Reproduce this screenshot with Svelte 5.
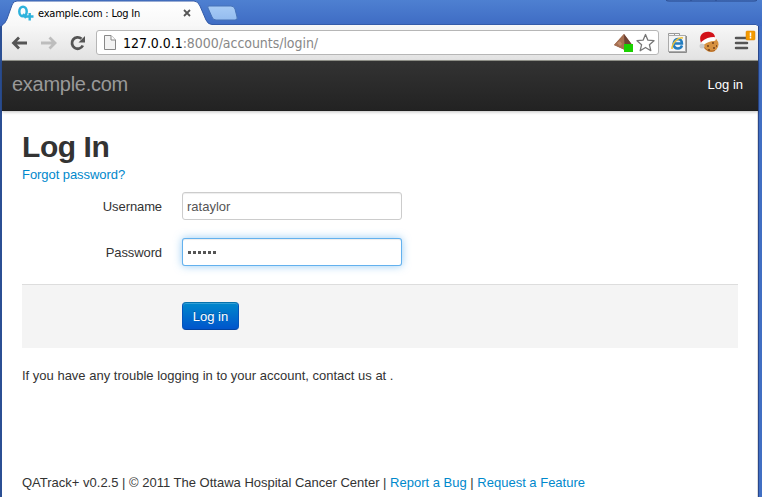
<script>
  let username = $state('rataylor');
  let password = $state('secret');
</script>

<div class="window">
  <header class="tabs">
    <svg class="tab-shape" width="762" height="26" viewBox="0 0 762 26">
      <defs>
        <linearGradient id="tab" x2="0" y2="1"><stop stop-color="#fff" /><stop offset="1" stop-color="#f7f7f7" /></linearGradient>
        <linearGradient id="newtab" x2="0" y2="1"><stop stop-color="#a7cbf5" /><stop offset="1" stop-color="#94bcef" /></linearGradient>
      </defs>
      <path d="M2 28V25Q5 24 7 19L12 5Q13 1 17 1H194Q198 1 200 6L206 20Q208 24.500 212 24.500H756Q758 25 758 28Z" fill="url(#tab)" stroke="#345ba8" />
      <path d="M209 6H231Q234 6 235 9L237 17Q238 20 235 20H216Q213 20 212 17L208 8Q207 6 209 6Z" fill="url(#newtab)" stroke="#4672b7" />
      <path d="M666 0Q666 1 669 1H754Q757 1 757 0M691 0V1M716 0V1" fill="none" stroke="#29498b" />
    </svg>
    <div class="tab">
      <svg width="16" height="16" viewBox="0 0 16 16" fill="none" stroke="#2eb2dc">
        <ellipse cx="5" cy="6.500" rx="3.700" ry="4.800" stroke-width="2.500" />
        <path d="M5 9l3 4" stroke-width="2.200" /><path d="M8 11.500h7.500M11.700 8v7.500" stroke-width="2.400" />
      </svg>
      <span>example.com : Log In</span>
      <svg class="close" width="8" height="8" viewBox="0 0 8 8"><path d="M1 1l6 6M7 1L1 7" stroke="#555" stroke-width="1.800" /></svg>
    </div>
  </header>

  <div class="toolbar">
    <svg class="nav" width="78" height="20" viewBox="0 0 78 20" fill="none">
      <path d="M3 10H17M9 4.500L3.500 10l5.500 5.500" stroke="#555" stroke-width="2.800" />
      <path d="M31 10h14M39.500 4.500L45 10l-5.500 5.500" stroke="#bdbdbd" stroke-width="2.800" />
      <path d="M72.800 12.500A5.700 5.700 0 1 1 71.500 5.800" stroke="#555" stroke-width="2.800" />
      <path d="M75 3v6.500h-6.500z" fill="#555" />
    </svg>
    <div class="address">
      <svg class="doc" width="12" height="15" viewBox="0 0 12 15"><path d="M.5.5h6.500l4.500 4.500v9.500H.5z" fill="#f3f3f3" stroke="#888" /><path d="M7 .5V5h4.500" fill="#fff" stroke="#888" /></svg>
      <span class="url"><b>127.0.0.1</b>:8000/accounts/login/</span>
      <svg class="page-icons" width="42" height="20" viewBox="0 0 42 20">
        <path d="M10 2L19 14l-8 4L0 13z" fill="#8b5a43" /><path d="M10 2l1 16L0 13z" fill="#a66f51" /><path d="M10 2l9 12-8 4z" fill="#6e4335" />
        <path d="M3 11l3-2 2 3-2 2z" fill="#bd8a69" />
        <rect x="10" y="12" width="9" height="8" fill="#1bd000" />
        <path d="M31.500 2.500l2.400 5.700 6.100.5-4.600 4 1.400 6-5.300-3.200-5.300 3.200 1.400-6-4.600-4 6.100-.5z" fill="#fff" stroke="#777" stroke-width="1.300" stroke-linejoin="round" />
      </svg>
    </div>
    <svg class="extensions" width="94" height="28" viewBox="0 0 94 28">
      <path d="M4.500 5.500h6v4h-6zM10.500 5.500h5v3h-5z" fill="#f8f8f8" stroke="#999" />
      <rect x="4.500" y="7.500" width="17" height="16" fill="#f5f5f5" stroke="#aaa" />
      <path d="M5 24.500h17.500V8" fill="none" stroke="#8b8b8b" />
      <path d="M10 15.500h8q0-4-4-4.500-4 .5-4.500 5 .5 4.500 4.500 4.500 3 0 4-3" fill="none" stroke="#237dc0" stroke-width="2.400" />
      <path d="M8 21c0-6 6-12 11-11" fill="none" stroke="#eac13d" stroke-width="1.500" />
      <circle cx="47" cy="16.500" r="7.500" fill="#d6913f" /><path d="M40 19.500q5 5 11 3" stroke="#ae6323" fill="none" />
      <path d="M43 17h2v2h-2zM48 14h2v2h-2zM49 19h2v2h-2zM44 21h2v2h-2zM52 17h1v2h-1z" fill="#8a5323" />
      <path d="M37 15C34 7 39 3 46 4q5 1 5 6l-11 5z" fill="#d21219" />
      <path d="M39 15q5-4 11-4" stroke="#fff" stroke-width="3.800" stroke-linecap="round" fill="none" /><circle cx="38" cy="18" r="2.500" fill="#ccc" />
      <path d="M72 10h11M72 15h11M72 20h11" stroke="#555" stroke-width="2.500" stroke-linecap="round" />
      <rect x="82" y="3" width="9" height="9" rx="1" fill="#f49a00" stroke="#dc8200" stroke-width=".5" />
      <path d="M86.500 4.500v4M86.500 9v1.500" stroke="#fff" stroke-width="1.500" />
    </svg>
  </div>

  <div class="viewport">
    <nav class="navbar"><span class="brand">example.com</span><span class="login-link">Log in</span></nav>
    <main>
      <h1>Log In</h1>
      <div class="forgot"><a href="#forgot">Forgot password?</a></div>
      <form onsubmit={(e) => e.preventDefault()}>
        <div class="field"><label for="user">Username</label><input id="user" bind:value={username} /></div>
        <div class="field"><label for="pass">Password</label>
          <div class="password"><input id="pass" class="focused" type="password" bind:value={password} />
            <span class="dots">{#each password as _}<i></i>{/each}</span>
          </div>
        </div>
        <div class="actions"><button>Log in</button></div>
      </form>
      <p class="trouble">If you have any trouble logging in to your account, contact us at .</p>
      <footer>QATrack+ v0.2.5 | © 2011 The Ottawa Hospital Cancer Center | <a href="#bug">Report a Bug</a> | <a href="#feature">Request a Feature</a></footer>
    </main>
  </div>
</div>

<style>
  :global(body) { margin: 0; overflow: hidden; }
  * { box-sizing: border-box; }
  .window { width: 762px; height: 497px; overflow: hidden; display: flex; flex-direction: column; background: linear-gradient(90deg, #2b4f94 0 2px, #3c69bd 2px 758px, #29478c 758px 759px, #416fc3 759px); font: 13px/18px "Liberation Sans", Arial, sans-serif; color: #333; }
  .tabs { height: 26px; flex: none; position: relative; background: linear-gradient(#4e80d1, #3e6bc3); }
  .tab-shape { position: absolute; inset: 0; }
  .tab { position: relative; display: flex; width: 191px; height: 26px; padding: 5px 0 0 18px; color: #000; font: 11px/17px "DejaVu Sans Condensed", "DejaVu Sans", sans-serif; }
  .tab span { margin-left: 4px; letter-spacing: -.22px; white-space: nowrap; }
  .close { margin: 4px 0 0 auto; }
  .toolbar { height: 35px; flex: none; margin: 0 4px 0 2px; display: flex; align-items: center; background: linear-gradient(#f7f7f7, #e2e2e2); border-bottom: 1px solid #96978f; }
  .nav { flex: none; margin: 0 0 1px 8px; }
  .address { width: 563px; height: 25px; margin: 0 0 2px 8px; flex: none; display: flex; align-items: center; padding: 0 2px 0 7px; background: #fff; border: 1px solid #b6b6b6; border-radius: 3px; }
  .doc { margin-top: 1px; }
  .url { margin: 2px 0 0 7px; font: 14px/20px "DejaVu Sans Condensed", sans-serif; letter-spacing: -.05px; color: #888; white-space: nowrap; }
  .url b { color: #000; font-weight: 400; }
  .page-icons { margin-left: auto; }
  .extensions { flex: none; margin: 0 0 3px 5px; }
  .viewport { flex: 1; margin: 0 4px 0 2px; background: #fff; border-right: 1px solid #ddd; }
  .navbar { height: 50px; margin-right: -1px; display: flex; justify-content: space-between; padding: 0 15px 0 10px; background: linear-gradient(#333, #222); box-shadow: 0 1px 3px rgba(0,0,0,.25), inset 0 -1px rgba(0,0,0,.1); }
  .brand { font-size: 20px; line-height: 47px; letter-spacing: -.27px; color: #999; }
  .login-link { line-height: 47px; color: #fff; }
  main { padding: 18px 19px 0 20px; }
  h1 { margin: 0; font-size: 30px; line-height: 36px; letter-spacing: -.45px; }
  a { color: #08c; text-decoration: none; }
  .forgot { height: 27px; padding-top: 1px; letter-spacing: -.06px; }
  .field { display: flex; height: 46px; }
  label { width: 140px; margin-right: 20px; padding-top: 6px; text-align: right; letter-spacing: -.1px; }
  input { width: 220px; height: 28px; padding: 4px; margin: 0; border: 1px solid #ccc; border-radius: 3px; outline: 0; background: #fff; color: #555; font: inherit; box-shadow: inset 0 1px 1px rgba(0,0,0,.075); }
  .focused { border-color: rgba(82,168,236,.9); color: transparent; box-shadow: inset 0 1px 1px rgba(0,0,0,.075), 0 0 8px rgba(82,168,236,.6); }
  .password { position: relative; }
  .dots { position: absolute; left: 6px; top: 13px; display: flex; gap: 2px; }
  .dots i { width: 3px; height: 3px; background: #555; }
  .actions { height: 64px; padding: 17px 0 0 160px; border-top: 1px solid #ddd; background: #f4f4f4; }
  button { width: 57px; height: 28px; padding: 1px 0 0; border: 1px solid; border-color: #0572ad #0454b9 #0343a0; border-radius: 4px; background: linear-gradient(#08c, #05c); color: #fff; font: inherit; box-shadow: inset 0 1px rgba(255,255,255,.2); text-shadow: 0 -1px rgba(0,0,0,.25); }
  .trouble { margin: 19px 0 0; white-space: nowrap; }
  footer { margin-top: 89px; white-space: nowrap; }
</style>
